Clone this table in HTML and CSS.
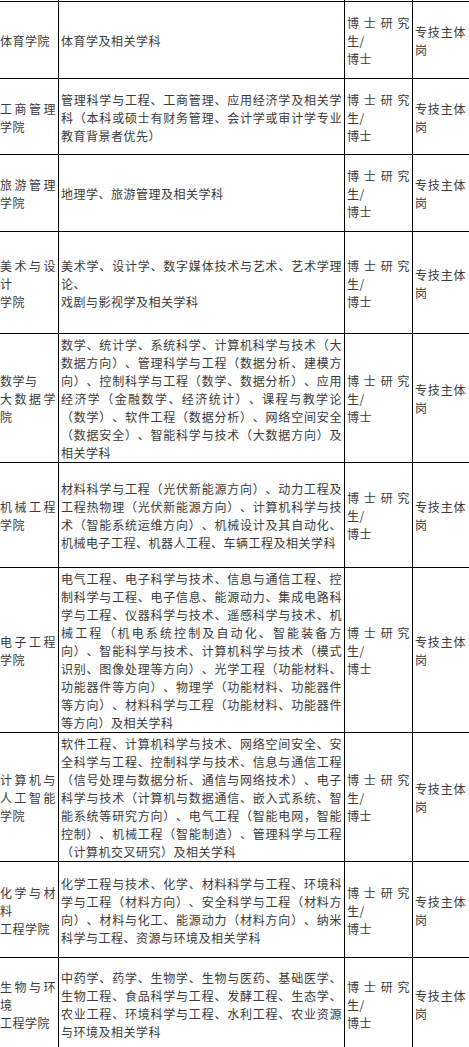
FILE: index.html
```html
<!DOCTYPE html>
<html lang="zh-CN">
<head>
<meta charset="utf-8">
<title>招聘岗位</title>
<link rel="stylesheet" href="styles.css">
</head>
<body>
<table class="posts">
  <colgroup>
    <col class="c-college">
    <col class="c-major">
    <col class="c-degree">
    <col class="c-type">
  </colgroup>
  <tbody>
    <tr class="row-cut"><td></td><td></td><td></td><td></td></tr>
    <tr class="h77">
      <td>体育学院</td>
      <td>体育学及相关学科</td>
      <td>博士研究生/<br>博士</td>
      <td class="type">专技主体岗</td>
    </tr>
    <tr class="h76">
      <td>工商管理学院</td>
      <td>管理科学与工程、工商管理、应用经济学及相关学科（本科或硕士有财务管理、会计学或审计学专业教育背景者优先）</td>
      <td>博士研究生/<br>博士</td>
      <td class="type">专技主体岗</td>
    </tr>
    <tr class="h77">
      <td>旅游管理学院</td>
      <td>地理学、旅游管理及相关学科</td>
      <td>博士研究生/<br>博士</td>
      <td class="type">专技主体岗</td>
    </tr>
    <tr class="h102">
      <td>美术与设计<br>学院</td>
      <td>美术学、设计学、数字媒体技术与艺术、艺术学理论、<br>戏剧与影视学及相关学科</td>
      <td>博士研究生/<br>博士</td>
      <td class="type">专技主体岗</td>
    </tr>
    <tr class="h128">
      <td>数学与<br>大数据学院</td>
      <td>数学、统计学、系统科学、计算机科学与技术（大数据方向）、管理科学与工程（数据分析、建模方向）、控制科学与工程（数学、数据分析）、应用经济学（金融数学、经济统计）、课程与教学论（数学）、软件工程（数据分析）、网络空间安全（数据安全）、智能科学与技术（大数据方向）及相关学科</td>
      <td>博士研究生/<br>博士</td>
      <td class="type">专技主体岗</td>
    </tr>
    <tr class="h105">
      <td>机械工程学院</td>
      <td>材料科学与工程（光伏新能源方向）、动力工程及工程热物理（光伏新能源方向）、计算机科学与技术（智能系统运维方向）、机械设计及其自动化、机械电子工程、机器人工程、车辆工程及相关学科</td>
      <td>博士研究生/<br>博士</td>
      <td class="type">专技主体岗</td>
    </tr>
    <tr class="h164">
      <td>电子工程学院</td>
      <td>电气工程、电子科学与技术、信息与通信工程、控制科学与工程、电子信息、能源动力、集成电路科学与工程、仪器科学与技术、遥感科学与技术、机械工程（机电系统控制及自动化、智能装备方向）、智能科学与技术、计算机科学与技术（模式识别、图像处理等方向）、光学工程（功能材料、功能器件等方向）、物理学（功能材料、功能器件等方向）、材料科学与工程（功能材料、功能器件等方向）及相关学科</td>
      <td>博士研究生/<br>博士</td>
      <td class="type">专技主体岗</td>
    </tr>
    <tr class="h129">
      <td>计算机与人工智能学院</td>
      <td>软件工程、计算机科学与技术、网络空间安全、安全科学与工程、控制科学与技术、信息与通信工程（信号处理与数据分析、通信与网络技术）、电子科学与技术（计算机与数据通信、嵌入式系统、智能系统等研究方向）、电气工程（智能电网，智能控制）、机械工程（智能制造）、管理科学与工程（计算机交叉研究）及相关学科</td>
      <td>博士研究生/<br>博士</td>
      <td class="type">专技主体岗</td>
    </tr>
    <tr class="h96">
      <td>化学与材料<br>工程学院</td>
      <td>化学工程与技术、化学、材料科学与工程、环境科学与工程（材料方向）、安全科学与工程（材料方向）、材料与化工、能源动力（材料方向）、纳米科学与工程、资源与环境及相关学科</td>
      <td>博士研究生/<br>博士</td>
      <td class="type">专技主体岗</td>
    </tr>
    <tr class="h92">
      <td>生物与环境<br>工程学院</td>
      <td>中药学、药学、生物学、生物与医药、基础医学、生物工程、食品科学与工程、发酵工程、生态学、农业工程、环境科学与工程、水利工程、农业资源与环境及相关学科</td>
      <td>博士研究生/<br>博士</td>
      <td class="type">专技主体岗</td>
    </tr>
  </tbody>
</table>
</body>
</html>
```

FILE: styles.css
```css
html, body {
  margin: 0;
  padding: 0;
  background: #ffffff;
}

body {
  overflow: hidden;
}

.posts {
  border-collapse: collapse;
  table-layout: fixed;
  width: 475px;
  margin-left: -3px;
  font-family: "Noto Sans CJK SC", "Noto Sans", sans-serif;
  font-size: 12px;
  line-height: 18px;
  letter-spacing: 0.5px;
  color: #3a3a3a;
  text-spacing-trim: space-all;
}

.c-college { width: 61px; }
.c-major { width: 286px; }
.c-degree { width: 68px; }
.c-type { width: 60px; }

.posts td {
  border: 1px solid #000;
  padding: 2px 2px 0 2px;
  vertical-align: middle;
  text-align: justify;
  word-break: normal;
  line-break: strict;
}

.posts td.type {
  padding-right: 6px;
}

.row-cut td {
  padding: 0;
  height: 1px;
  border-top: none;
}

.h76 { height: 76px; }
.h77 { height: 77px; }
.h92 { height: 92px; }
.h96 { height: 96px; }
.h102 { height: 102px; }
.h105 { height: 105px; }
.h128 { height: 128px; }
.h129 { height: 129px; }
.h164 { height: 164px; }
```
